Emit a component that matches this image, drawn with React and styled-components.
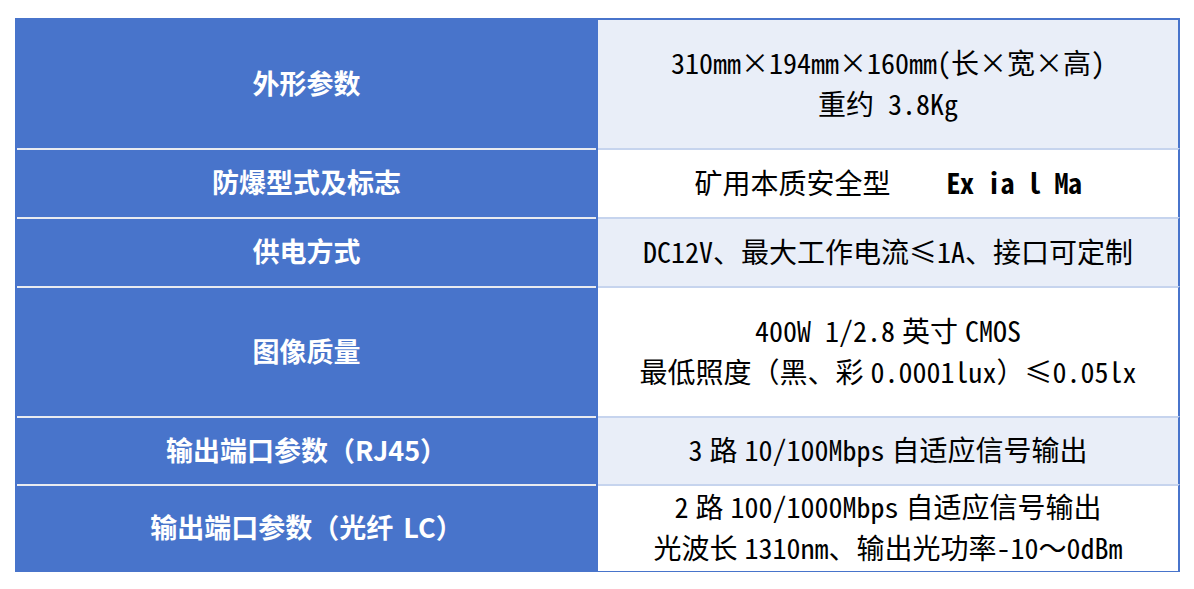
import React from "react";
import styled, { createGlobalStyle } from "styled-components";

const GlobalStyle = createGlobalStyle`
  html, body {
    margin: 0;
    padding: 0;
    background: #ffffff;
  }
`;

const Gap = styled.span`
  display: inline-block;
  width: ${(p) => p.$w || 7}px;
`;

const MarkText = styled.span`
  font-weight: 700;
  margin-left: 56px;
  letter-spacing: -0.5px;
`;

const rows = [
  {
    label: "外形参数",
    height: 130,
    lines: ["310mm×194mm×160mm(长×宽×高)", "重约 3.8Kg"],
  },
  {
    label: "防爆型式及标志",
    height: 69,
    lines: [
      <>
        矿用本质安全型<MarkText>Ex ia l Ma</MarkText>
      </>,
    ],
  },
  {
    label: "供电方式",
    height: 69,
    lines: ["DC12V、最大工作电流≤1A、接口可定制"],
  },
  {
    label: "图像质量",
    height: 130,
    lines: [
      <>
        400W 1/2.8<Gap />英寸<Gap />CMOS
      </>,
      <>
        最低照度（黑、彩<Gap />0.0001lux）≤0.05lx
      </>,
    ],
  },
  {
    label: "输出端口参数（RJ45）",
    height: 68,
    lines: [
      <>
        3<Gap />路<Gap />10/100Mbps<Gap />自适应信号输出
      </>,
    ],
  },
  {
    label: (
      <>
        输出端口参数（光纤<Gap $w={10} />LC）
      </>
    ),
    height: 86,
    lines: [
      <>
        2<Gap />路<Gap />100/1000Mbps<Gap />自适应信号输出
      </>,
      <>
        光波长<Gap />1310nm、输出光功率-10～0dBm
      </>,
    ],
  },
];

const App = () => {
  return (
    <>
      <GlobalStyle />
      <Page>
        <Table>
          {rows.map((row, index) => (
            <Row key={index} $height={row.height}>
              <Label $first={index === 0}>{row.label}</Label>
              <Value $first={index === 0} $shaded={index % 2 === 0}>
                {row.lines.map((line, i) => (
                  <Line key={i}>{line}</Line>
                ))}
              </Value>
            </Row>
          ))}
        </Table>
      </Page>
    </>
  );
};

export default App;

const Page = styled.div`
  padding: 18px 0 0 15px;
`;

const Table = styled.div`
  width: 1165px;
  display: flex;
  flex-direction: column;
  border-bottom: 2px solid #4874cb;
`;

const Row = styled.div`
  display: grid;
  grid-template-columns: 583px 582px;
  height: ${(p) => p.$height}px;
`;

const Label = styled.div`
  position: relative;
  display: flex;
  align-items: center;
  justify-content: center;
  background: #4874cb;
  color: #ffffff;
  font-family: "Noto Sans CJK SC", "Noto Sans", sans-serif;
  font-weight: 700;
  font-size: 27px;
  padding-bottom: 2px;
  white-space: pre;
  &::before {
    content: "";
    position: absolute;
    top: 0;
    left: 2px;
    right: 2px;
    height: 2px;
    background: ${(p) => (p.$first ? "#4874cb" : "#e9ebf0")};
  }
`;

const Value = styled.div`
  display: flex;
  flex-direction: column;
  align-items: center;
  justify-content: center;
  background: ${(p) => (p.$shaded ? "#e9eef8" : "#ffffff")};
  border-top: 2px solid ${(p) => (p.$first ? "#4874cb" : "#c6d4ee")};
  border-right: 2px solid #4874cb;
  color: #000000;
  font-family: "Noto Sans Mono CJK SC", "Noto Sans CJK SC", monospace;
  font-size: 28px;
  line-height: 41px;
  padding-bottom: 3px;
`;

const Line = styled.div`
  white-space: pre;
`;
